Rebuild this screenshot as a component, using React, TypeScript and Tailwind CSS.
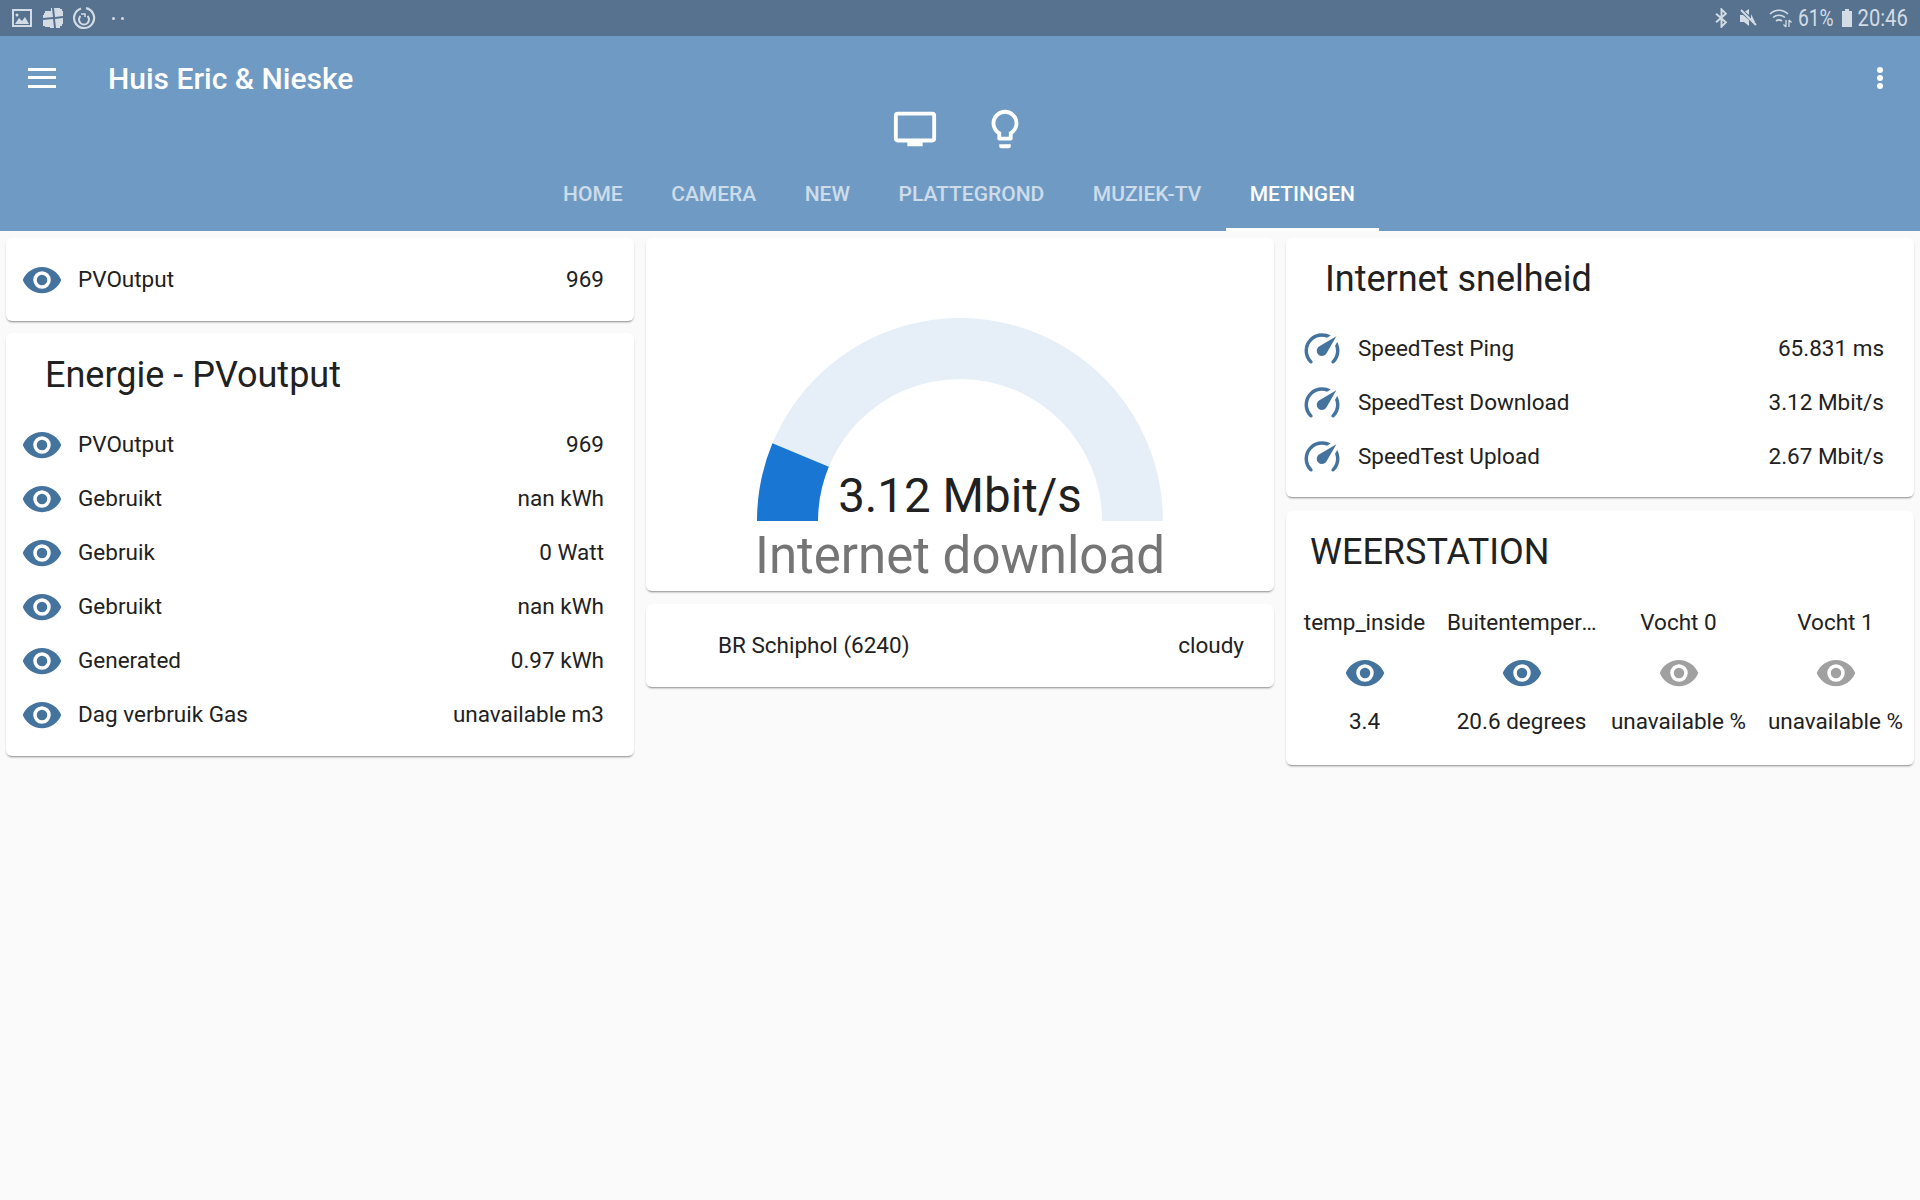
const eyePath =
  "M12,9A3,3 0 0,0 9,12A3,3 0 0,0 12,15A3,3 0 0,0 15,12A3,3 0 0,0 12,9M12,17A5,5 0 0,1 7,12A5,5 0 0,1 12,7A5,5 0 0,1 17,12A5,5 0 0,1 12,17M12,4.5C7,4.5 2.73,7.61 1,12C2.73,16.39 7,19.5 12,19.5C17,19.5 21.27,16.39 23,12C21.27,7.61 17,4.5 12,4.5Z";
const speedPath =
  "M12,16A3,3 0 0,1 9,13C9,11.88 9.61,10.9 10.5,10.39L20.21,4.77L14.68,14.35C14.18,15.33 13.17,16 12,16M12,3C13.81,3 15.5,3.5 16.97,4.32L14.87,5.53C14,5.19 13,5 12,5A8,8 0 0,0 4,13C4,15.21 4.89,17.21 6.34,18.65H6.35C6.74,19.04 6.74,19.67 6.35,20.06C5.96,20.45 5.32,20.45 4.93,20.07V20.07C3.12,18.26 2,15.76 2,13A10,10 0 0,1 12,3M22,13C22,15.76 20.88,18.26 19.07,20.07V20.07C18.68,20.45 18.05,20.45 17.66,20.06C17.27,19.67 17.27,19.04 17.66,18.65V18.65C19.11,17.2 20,15.21 20,13C20,12 19.81,11 19.46,10.1L20.68,8C21.5,9.5 22,11.18 22,13Z";

const Mdi = ({ d, className }: { d: string; className: string }) => (
  <svg viewBox="0 0 24 24" className={className} fill="currentColor">
    <path d={d} />
  </svg>
);

const Card = ({ className = "", children }: { className?: string; children: React.ReactNode }) => (
  <div className={`bg-white rounded-[6px] shadow-[0_2px_2px_rgba(0,0,0,0.14),0_1px_2px_rgba(0,0,0,0.06),0_3px_1px_-2px_rgba(0,0,0,0.2)] ${className}`}>
    {children}
  </div>
);

const Row = ({ label, value, icon = eyePath }: { label: string; value: string; icon?: string }) => (
  <div className="h-[54px] flex items-center pl-[15px] pr-[30px]">
    <Mdi d={icon} className="w-[42px] h-[42px] text-[#44739e] shrink-0" />
    <div className="ml-[15px] flex-1">{label}</div>
    <div>{value}</div>
  </div>
);

const StatusBar = () => (
  <div className="h-[36px] bg-[#56728f] flex items-center justify-between pl-[11px] pr-[12px] text-[#d3dce5]">
    <div className="flex items-center">
      <svg viewBox="0 0 22 20" className="w-[22px] h-[20px]" fill="currentColor">
        <path d="M1 1h20v18H1zM3 3v14h16V3zM4 16l4-6 3 3 3-4 4 7zM6 5.500a1.500 1.500 0 1 1 0 3 1.500 1.500 0 0 1 0-3z" fillRule="evenodd" />
      </svg>
      <svg viewBox="0 0 22 22" className="w-[22px] h-[22px] ml-[9px]" fill="currentColor">
        <path d="M1 8h1V6h1V4h6V1h1l1 9-10 1zM12 1h6v1h2v2h1v5l-8 1zM1 13l10-1 1 9H8v-1H3v-1H1zM13 12l8-1v6h-1v2h-2v2h-4z" />
      </svg>
      <svg viewBox="0 0 24 24" className="w-[24px] h-[24px] ml-[8px]" fill="none" stroke="currentColor">
        <path d="M14 2.200A10 10 0 1 1 9 2.500" strokeWidth="2.200" />
        <path d="M8.500 10a5 5 0 1 0 7 0" strokeWidth="2" />
        <path d="M9 8l4 0v3" strokeWidth="1.500" />
      </svg>
      <div className="flex gap-[6px] ml-[16px]">
        <div className="w-[3px] h-[3px] rounded-full bg-[#d3dce5]" />
        <div className="w-[3px] h-[3px] rounded-full bg-[#d3dce5]" />
      </div>
    </div>
    <div className="flex items-center text-[24px] leading-none">
      <svg viewBox="0 0 12 18" className="w-[13px] h-[20px]" fill="none" stroke="currentColor" strokeWidth="1.800">
        <path d="M1 5l9 8-4 4V1l4 4-9 8" />
      </svg>
      <svg viewBox="0 0 20 20" className="w-[20px] h-[20px] ml-[11px]" fill="currentColor">
        <path d="M10 1v6L6 3.500zM1 7h3l6 5v6l-5-4H1zM12 6l4 8-2 0-2-3z" />
        <path d="M2 2l15 15" stroke="currentColor" strokeWidth="2" />
      </svg>
      <svg viewBox="0 0 24 20" className="w-[24px] h-[20px] ml-[10px]" fill="none" stroke="currentColor" strokeWidth="1.600">
        <path d="M1 6c5-5 13-5 18 0M4 9.500c3.500-3 8.500-3 12 0M7 13c2-1.500 4-1.500 6 0" />
        <path d="M17 12v7M14.500 16.500l2.500 2.500M20 19v-7M22.500 14.500l-2.500-2.500" strokeWidth="1.300" />
      </svg>
      <div className="ml-[6px] w-[35px] flex justify-end">
        <span className="inline-block origin-right scale-x-[0.8]">61%</span>
      </div>
      <svg viewBox="0 0 12 20" className="w-[12px] h-[20px] ml-[7px]" fill="currentColor">
        <path d="M4 1h4v2h3v16H1V3h3z" />
      </svg>
      <div className="ml-[6px] w-[49px] flex justify-end">
        <span className="inline-block origin-right scale-x-[0.84]">20:46</span>
      </div>
    </div>
  </div>
);

const Header = () => (
  <div className="bg-[#6f9ac3] text-white">
    <div className="h-[68px] pt-[16px] flex items-center pl-[28px] pr-[24px]">
      <svg viewBox="0 0 28 20" className="w-[28px] h-[20px]" fill="currentColor">
        <path d="M0 0h28v3H0zM0 8h28v3H0zM0 17h28v3H0z" />
      </svg>
      <div className="ml-[52px] text-[30px] font-medium flex-1">Huis Eric &amp; Nieske</div>
      <svg viewBox="0 0 6 22" className="w-[6px] h-[22px] mr-[13px]" fill="currentColor">
        <circle cx="3" cy="3" r="3" />
        <circle cx="3" cy="11" r="3" />
        <circle cx="3" cy="19" r="3" />
      </svg>
    </div>
    <div className="h-[50px] flex items-center justify-center gap-[44px] pr-[1px]">
      <Mdi d="M21,17H3V5H21M21,3H3A2,2 0 0,0 1,5V17A2,2 0 0,0 3,19H8V21H16V19H21A2,2 0 0,0 23,17V5A2,2 0 0,0 21,3Z" className="w-[46px] h-[46px]" />
      <Mdi d="M12,2A7,7 0 0,1 19,9C19,11.38 17.81,13.47 16,14.74V17A1,1 0 0,1 15,18H9A1,1 0 0,1 8,17V14.74C6.19,13.47 5,11.38 5,9A7,7 0 0,1 12,2M9,21V20H15V21A1,1 0 0,1 14,22H10A1,1 0 0,1 9,21M12,4A5,5 0 0,0 7,9C7,11.05 8.23,12.81 10,13.58V16H14V13.58C15.77,12.81 17,11.05 17,9A5,5 0 0,0 12,4Z" className="w-[46px] h-[46px]" />
    </div>
    <div className="h-[77px] flex justify-center pr-[2px] text-[21px] font-medium">
      {["HOME", "CAMERA", "NEW", "PLATTEGROND", "MUZIEK-TV"].map((t) => (
        <div key={t} className="px-[24.25px] pt-[8px] flex items-center border-b-[3px] border-transparent text-white/65">
          {t}
        </div>
      ))}
      <div className="px-[24.25px] pt-[8px] flex items-center border-b-[3px] border-white">METINGEN</div>
    </div>
  </div>
);

const Gauge = () => (
  <Card className="h-[353px] relative">
    <div className="pt-[80px] flex justify-center">
      <svg viewBox="0 0 406 203" className="w-[406px] h-[203px]">
        <path d="M0 203A203 203 0 0 1 406 203H345A142 142 0 0 0 61 203Z" fill="#e6eff8" />
        <path d="M0 203A203 203 0 0 1 15.400 125.300L71.800 148.700A142 142 0 0 0 61 203Z" fill="#1976d2" />
      </svg>
    </div>
    <div className="absolute top-[226px] inset-x-0 text-center text-[47.5px] leading-[64px] text-[#212121]">3.12 Mbit/s</div>
    <div className="absolute top-[286px] inset-x-0 text-center text-[51px] leading-[64px] text-[#757575]">Internet download</div>
  </Card>
);

const Glance = ({ name, value, muted, nameClass = "" }: { name: string; value: string; muted?: boolean; nameClass?: string }) => (
  <div className="flex-1 min-w-0 flex flex-col items-center">
    <div className={`w-full truncate text-center h-[30px] leading-[30px] ${nameClass}`}>{name}</div>
    <Mdi d={eyePath} className={`w-[42px] h-[42px] mt-[15px] ${muted ? "text-[#a0a0a0]" : "text-[#44739e]"}`} />
    <div className="mt-[12px] h-[30px] leading-[30px] whitespace-nowrap">{value}</div>
  </div>
);

export default function App() {
  return (
    <div className="min-h-[1200px] bg-[#fafafa] font-[Roboto,sans-serif] text-[22.5px] text-[#212121]">
      <StatusBar />
      <Header />
      <div className="grid grid-cols-3 gap-[12px] px-[6px] pt-[7px]">
        <div className="flex flex-col gap-[12px]">
          <Card className="h-[83px] pt-[15px]">
            <Row label="PVOutput" value="969" />
          </Card>
          <Card className="h-[423px]">
            <div className="pl-[39px] pt-[17px] h-[85px] text-[36px] leading-[50px]">Energie - PVoutput</div>
            <Row label="PVOutput" value="969" />
            <Row label="Gebruikt" value="nan kWh" />
            <Row label="Gebruik" value="0 Watt" />
            <Row label="Gebruikt" value="nan kWh" />
            <Row label="Generated" value="0.97 kWh" />
            <Row label="Dag verbruik Gas" value="unavailable m3" />
          </Card>
        </div>
        <div className="flex flex-col gap-[13px]">
          <Gauge />
          <Card className="h-[83px] flex items-center justify-between pl-[72px] pr-[30px]">
            <div>BR Schiphol (6240)</div>
            <div>cloudy</div>
          </Card>
        </div>
        <div className="flex flex-col gap-[14px]">
          <Card className="h-[259px]">
            <div className="pl-[39px] pt-[16px] h-[83.5px] text-[36px] leading-[50px]">Internet snelheid</div>
            <Row icon={speedPath} label="SpeedTest Ping" value="65.831 ms" />
            <Row icon={speedPath} label="SpeedTest Download" value="3.12 Mbit/s" />
            <Row icon={speedPath} label="SpeedTest Upload" value="2.67 Mbit/s" />
          </Card>
          <Card className="h-[254px]">
            <div className="pl-[24px] pt-[16px] h-[96px] text-[36px] leading-[50px]">WEERSTATION</div>
            <div className="flex">
              <Glance name="temp_inside" value="3.4" />
              <Glance name="Buitentemperatuur" value="20.6 degrees" nameClass="pl-[4px]" />
              <Glance name="Vocht 0" value="unavailable %" muted />
              <Glance name="Vocht 1" value="unavailable %" muted />
            </div>
          </Card>
        </div>
      </div>
    </div>
  );
}
